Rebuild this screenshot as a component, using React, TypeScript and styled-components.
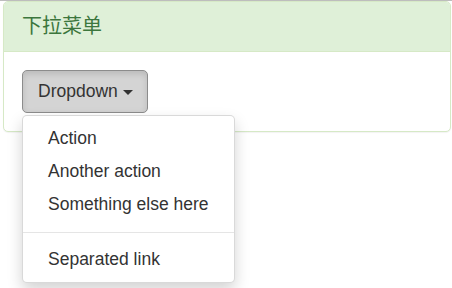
import React, { FC, useState } from "react";
import styled, { createGlobalStyle } from "styled-components";

const GlobalStyle = createGlobalStyle`
    html, body {
        margin: 0;
        padding: 0;
        background: #fff;
    }
    body {
        font-family: "Liberation Sans", Arial, "Noto Sans CJK SC", sans-serif;
        font-size: 17.5px;
        line-height: 25px;
        color: #333;
    }
    * {
        box-sizing: border-box;
    }
`

const links = ["Action", "Another action", "Something else here"];

const App: FC = () => {
    const [open, setOpen] = useState(true);

    return (
        <>
            <GlobalStyle />
            <Page>
                <Panel>
                    <PanelHeading>
                        <PanelTitle>下拉菜单</PanelTitle>
                    </PanelHeading>
                    <PanelBody>
                        <Dropdown>
                            <ToggleButton active={open} onClick={() => setOpen(!open)}>
                                Dropdown <Caret />
                            </ToggleButton>
                            {open && (
                                <Menu>
                                    {links.map(l => (
                                        <MenuItem key={l}>
                                            <MenuLink href="#">{l}</MenuLink>
                                        </MenuItem>
                                    ))}
                                    <Divider />
                                    <MenuItem>
                                        <MenuLink href="#">Separated link</MenuLink>
                                    </MenuItem>
                                </Menu>
                            )}
                        </Dropdown>
                    </PanelBody>
                </Panel>
            </Page>
        </>
    );
}

export default App;

const Page = styled.div`
    min-height: 100vh;
    border-top: 1px solid #bdbdbd;
    padding: 0 1px 0 3px;
`

const Panel = styled.div`
    background: #fff;
    border: 1px solid #d6e9c6;
    border-radius: 5px;
    box-shadow: 0 1px 1px rgba(0, 0, 0, 0.05);
`

const PanelHeading = styled.div`
    background: #dff0d8;
    color: #3c763d;
    border-bottom: 1px solid #d6e9c6;
    border-top-left-radius: 4px;
    border-top-right-radius: 4px;
    padding: 13px 18px 13px 18px;
`

const PanelTitle = styled.h3`
    margin: 0;
    font-size: 20px;
    font-weight: 400;
    line-height: 23px;
    font-family: "Liberation Sans", "Noto Sans CJK SC", sans-serif;
`

const PanelBody = styled.div`
    padding: 18px;
`

const Dropdown = styled.div`
    position: relative;
    display: inline-block;
`

interface ToggleButtonProps {
    active: boolean;
}

const ToggleButton = styled.button<ToggleButtonProps>`
    display: inline-flex;
    align-items: center;
    gap: 5px;
    height: 43px;
    padding: 0 14px 0 15px;
    font-family: inherit;
    font-size: 17.5px;
    line-height: 25px;
    color: #333;
    background: ${p => p.active ? "#d4d4d4" : "#fff"};
    border: 1px solid ${p => p.active ? "#8c8c8c" : "#ccc"};
    border-radius: 5px;
    box-shadow: ${p => p.active ? "inset 0 3px 6px rgba(0, 0, 0, 0.125)" : "none"};
    cursor: pointer;
`

const Caret = styled.span`
    display: inline-block;
    width: 0;
    height: 0;
    margin-top: 2px;
    border-top: 5px solid #333;
    border-left: 5px solid transparent;
    border-right: 5px solid transparent;
`

const Menu = styled.ul`
    position: absolute;
    top: 100%;
    left: 0;
    z-index: 1000;
    margin: 2px 0 0;
    padding: 6px 0;
    list-style: none;
    min-width: 200px;
    white-space: nowrap;
    background: #fff;
    border: 1px solid rgba(0, 0, 0, 0.15);
    border-radius: 5px;
    box-shadow: 0 7px 15px rgba(0, 0, 0, 0.175);
`

const MenuItem = styled.li`
    display: block;
`

const MenuLink = styled.a`
    display: block;
    padding: 4px 25px;
    line-height: 25px;
    color: #333;
    text-decoration: none;

    &:hover {
        background: #f5f5f5;
        color: #262626;
    }
`

const Divider = styled.li`
    height: 1px;
    margin: 11px 0 10px;
    background: #e5e5e5;
`
